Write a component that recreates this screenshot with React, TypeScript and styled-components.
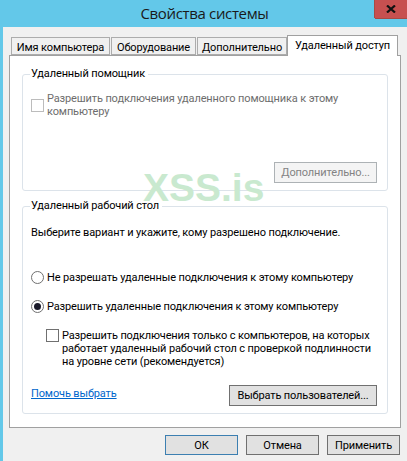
import React from 'react';
import styled, { createGlobalStyle } from 'styled-components';

const Global = createGlobalStyle`
  html, body {
    margin: 0;
    padding: 0;
    background: #f0f0f0;
  }
  body {
    font-family: Roboto, "Noto Sans", sans-serif;
    font-size: 11px;
    letter-spacing: -0.13px;
    color: #000;
  }
`;

const Window = styled.div`
  position: relative;
  width: 407px;
  height: 461px;
  overflow: hidden;
  background: #63c8e9;
  display: flex;
  flex-direction: column;
`;

const TitleBar = styled.div`
  height: 27px;
  display: flex;
  flex-shrink: 0;
`;

const Title = styled.div`
  flex: 1;
  text-align: center;
  font-family: "Open Sans", sans-serif;
  font-size: 15px;
  line-height: 26px;
  color: #1a1a1a;
  padding-left: 34px;
  letter-spacing: -0.35px;
`;

const CloseButton = styled.div`
  width: 32px;
  height: 18px;
  background: #c75050;
  display: flex;
  align-items: center;
  justify-content: center;
  box-shadow: -1px 0 0 #a84a44, 0 1px 0 #a84a44;
`;

const Client = styled.div`
  flex: 1;
  margin-left: 3px;
  background: #f0f0f0;
  padding: 8px 6px 0 6px;
  display: flex;
  flex-direction: column;
`;

const TabStrip = styled.div`
  display: flex;
  align-items: flex-end;
  height: 20px;
  padding-left: 2px;
  position: relative;
  z-index: 1;
`;

const Tab = styled.div<{ $active?: boolean; $width: number }>`
  box-sizing: border-box;
  width: ${(p) => p.$width}px;
  height: ${(p) => (p.$active ? 21 : 18)}px;
  margin-left: ${(p) => (p.$active ? -1 : 0)}px;
  margin-right: ${(p) => (p.$active ? 0 : 1)}px;
  margin-bottom: ${(p) => (p.$active ? -1 : 0)}px;
  border: 1px solid ${(p) => (p.$active ? '#a0a0a0' : '#acacac')};
  border-bottom: ${(p) => (p.$active ? 'none' : '1px solid #acacac')};
  background: ${(p) => (p.$active ? '#fff' : '#f0f0f0')};
  text-align: center;
  line-height: 19px;
  white-space: nowrap;
`;

const Pane = styled.div`
  box-sizing: border-box;
  width: 392px;
  height: 373px;
  background: #fff;
  border: 1px solid #a0a0a0;
  padding: 10px 12px 0 12px;
  display: flex;
  flex-direction: column;
  gap: 7px;
`;

const Group = styled.fieldset<{ $height: number }>`
  box-sizing: border-box;
  height: ${(p) => p.$height}px;
  margin: 0;
  padding: 0 10px 6px 8px;
  border: 1px solid #dce3ea;
  border-radius: 3px;
  min-width: 0;
`;

const Legend = styled.legend`
  margin-left: -1px;
  padding: 0 3px 0 1px;
  line-height: 16px;
  white-space: nowrap;
`;

const Row = styled.div<{ $indent?: number; $top?: number; $center?: boolean }>`
  display: flex;
  align-items: ${(p) => (p.$center ? 'center' : 'flex-start')};
  gap: 3px;
  margin-left: ${(p) => p.$indent ?? 0}px;
  margin-top: ${(p) => p.$top ?? 0}px;
`;

const Label = styled.div<{ $disabled?: boolean }>`
  line-height: 13px;
  color: ${(p) => (p.$disabled ? '#6d6d6d' : '#000')};
  white-space: pre;
`;

const Box = styled.span<{ $disabled?: boolean }>`
  box-sizing: border-box;
  flex-shrink: 0;
  width: 13px;
  height: 13px;
  background: #fff;
  border: 1px solid ${(p) => (p.$disabled ? '#bcbcbc' : '#707070')};
`;

const Radio = styled.span<{ $checked?: boolean }>`
  box-sizing: border-box;
  flex-shrink: 0;
  width: 13px;
  height: 13px;
  border-radius: 50%;
  background: #fff;
  border: 1px solid #707070;
  display: flex;
  align-items: center;
  justify-content: center;
  &::after {
    content: '';
    display: ${(p) => (p.$checked ? 'block' : 'none')};
    width: 7px;
    height: 7px;
    border-radius: 50%;
    background: #1a1a2a;
  }
`;

const Intro = styled.div<{ $top: number }>`
  margin-top: ${(p) => p.$top}px;
  line-height: 16px;
`;

const ActionRow = styled.div<{ $top: number; $end?: boolean }>`
  display: flex;
  align-items: flex-start;
  justify-content: ${(p) => (p.$end ? 'flex-end' : 'space-between')};
  margin-top: ${(p) => p.$top}px;
`;

const HelpLink = styled.a`
  color: #0066cc;
  text-decoration: underline;
  line-height: 16px;
  margin-top: 1px;
`;

const Button = styled.div<{ $width: number; $height?: number; $disabled?: boolean; $default?: boolean }>`
  box-sizing: border-box;
  width: ${(p) => p.$width}px;
  height: ${(p) => p.$height ?? 21}px;
  flex-shrink: 0;
  border: 1px solid ${(p) => (p.$default ? '#3c7fb1' : p.$disabled ? '#adb2b5' : '#707070')};
  background: ${(p) => (p.$disabled ? '#f4f4f4' : '#e1e1e1')};
  color: ${(p) => (p.$disabled ? '#838383' : '#000')};
  display: flex;
  align-items: center;
  justify-content: center;
  white-space: nowrap;
`;

const Footer = styled.div`
  box-sizing: border-box;
  display: flex;
  justify-content: flex-end;
  gap: 8px;
  margin-top: 7px;
  padding-right: 1px;
  width: 392px;
`;

const Watermark = styled.div`
  position: absolute;
  left: 143px;
  top: 165px;
  font-family: "Liberation Sans", Arial, sans-serif;
  font-weight: 700;
  font-size: 39px;
  letter-spacing: 0;
  line-height: 45px;
  color: #c9e9cf;
  pointer-events: none;
`;

export default function App() {
  return (
    <>
      <Global />
      <Window>
        <TitleBar>
          <Title>Свойства системы</Title>
          <CloseButton>
            <svg width="10" height="8" viewBox="0 0 10 8">
              <path d="M1 0.5 L9 7.5 M9 0.5 L1 7.5" stroke="#111" strokeWidth="2.2" fill="none" />
            </svg>
          </CloseButton>
        </TitleBar>
        <Client>
          <TabStrip>
            <Tab $width={99}>Имя компьютера</Tab>
            <Tab $width={85}>Оборудование</Tab>
            <Tab $width={90}>Дополнительно</Tab>
            <Tab $width={111} $active>Удаленный доступ</Tab>
          </TabStrip>
          <Pane>
            <Group $height={125}>
              <Legend>Удаленный помощник</Legend>
              <Row $top={10} $center>
                <Box $disabled />
                <Label $disabled>{'Разрешить подключения удаленного помощника к этому\nкомпьютеру'}</Label>
              </Row>
              <ActionRow $top={44} $end>
                <Button $width={103} $disabled>Дополнительно...</Button>
              </ActionRow>
            </Group>
            <Group $height={216}>
              <Legend>Удаленный рабочий стол</Legend>
              <Intro $top={11}>Выберите вариант и укажите, кому разрешено подключение.</Intro>
              <Row $top={30}>
                <Radio />
                <Label>Не разрешать удаленные подключения к этому компьютеру</Label>
              </Row>
              <Row $top={16}>
                <Radio $checked />
                <Label>Разрешить удаленные подключения к этому компьютеру</Label>
              </Row>
              <Row $indent={15} $top={16}>
                <Box />
                <Label>{'Разрешить подключения только с компьютеров, на которых\nработает удаленный рабочий стол с проверкой подлинности\nна уровне сети (рекомендуется)'}</Label>
              </Row>
              <ActionRow $top={17}>
                <HelpLink>Помочь выбрать</HelpLink>
                <Button $width={148}>Выбрать пользователей...</Button>
              </ActionRow>
            </Group>
          </Pane>
          <Footer>
            <Button $width={73} $height={20} $default>ОК</Button>
            <Button $width={73} $height={20}>Отмена</Button>
            <Button $width={73} $height={20}>Применить</Button>
          </Footer>
        </Client>
        <Watermark>XSS.is</Watermark>
      </Window>
    </>
  );
}
